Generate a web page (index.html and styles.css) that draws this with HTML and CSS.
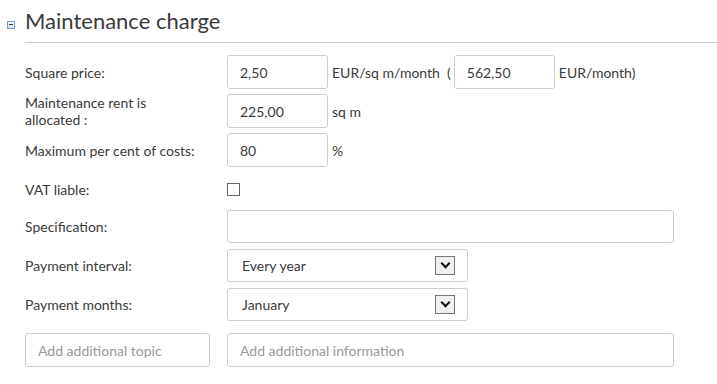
FILE: index.html
```html
<!DOCTYPE html>
<html lang="en">
<head>
    <meta charset="UTF-8">
    <meta name="viewport" content="width=device-width, initial-scale=1.0">
    <title>Maintenance charge</title>
    <link rel="stylesheet" href="styles.css">
</head>
<body>
    <div class="section-header">
        <span class="toggle"></span>
        <h2>Maintenance charge</h2>
    </div>

    <form class="charge-form">
        <div class="row">
            <label for="squarePrice">Square price:</label>
            <input type="text" id="squarePrice" class="field field-small" value="2,50">
            <span class="unit">EUR/sq m/month&nbsp;&nbsp;(</span>
            <input type="text" id="monthly" class="field field-small" value="562,50">
            <span class="unit">EUR/month)</span>
        </div>
        <div class="row">
            <label for="area">Maintenance rent is<br>allocated :</label>
            <input type="text" id="area" class="field field-small" value="225,00">
            <span class="unit">sq m</span>
        </div>
        <div class="row">
            <label for="maxCosts">Maximum per cent of costs:</label>
            <input type="text" id="maxCosts" class="field field-small" value="80">
            <span class="unit">%</span>
        </div>
        <div class="row row-check">
            <label for="vat">VAT liable:</label>
            <input type="checkbox" id="vat" class="check">
        </div>
        <div class="row row-short">
            <label for="spec">Specification:</label>
            <input type="text" id="spec" class="field field-wide field-spec">
        </div>
        <div class="row row-short">
            <label for="interval">Payment interval:</label>
            <div class="select-wrap">
                <select id="interval" class="field">
                    <option>Every year</option>
                </select>
                <span class="select-arrow"></span>
            </div>
        </div>
        <div class="row row-short">
            <label for="months">Payment months:</label>
            <div class="select-wrap">
                <select id="months" class="field">
                    <option>January</option>
                </select>
                <span class="select-arrow"></span>
            </div>
        </div>
        <div class="row row-extra">
            <input type="text" class="field field-topic" placeholder="Add additional topic">
            <input type="text" class="field field-wide" placeholder="Add additional information">
        </div>
    </form>
</body>
</html>
```

FILE: styles.css
```css
* {
    box-sizing: border-box;
    margin: 0;
    padding: 0;
}

body {
    font-family: Lato, "Liberation Sans", sans-serif;
    font-size: 14px;
    color: #3a3a3a;
    background: #fff;
}

.section-header {
    display: flex;
    align-items: center;
    padding: 8px 0 0 7px;
    height: 43px;
}
.toggle {
    width: 8px;
    height: 8px;
    border: 1px solid #7a9cc6;
    background: linear-gradient(#fff, #d8e2ee);
    position: relative;
    margin-right: 10px;
    margin-top: -2px;
}
.toggle::after {
    content: "";
    position: absolute;
    left: 1px;
    top: 2px;
    width: 4px;
    height: 1px;
    background: #333;
}
.section-header h2 {
    flex: 1;
    align-self: stretch;
    font-size: 22px;
    font-weight: normal;
    color: #3a3a3a;
    border-bottom: 1px solid #ccc;
    line-height: 26px;
}

.charge-form {
    padding: 12px 0 0 25px;
}
.row {
    display: flex;
    align-items: center;
    min-height: 34px;
    margin-bottom: 5px;
}
.row label {
    width: 202px;
    flex-shrink: 0;
    padding-right: 18px;
    line-height: 17px;
}
.row-check {
    margin-bottom: 4px;
}
.row-short {
    min-height: 33px;
    margin-bottom: 6px;
}
.row-extra {
    margin-top: 12px;
}

.field {
    height: 34px;
    border: 1px solid #ccc;
    border-radius: 3px;
    padding: 0 12px;
    font-family: inherit;
    font-size: 14px;
    color: #3a3a3a;
    background: #fff;
    outline: none;
}
.field::placeholder {
    color: #999;
}
.field-small {
    width: 101px;
}
.field-wide {
    width: 447px;
}
.field-spec {
    height: 33px;
}
.field-topic {
    width: 185px;
    margin-right: 17px;
}
.unit {
    padding-left: 4px;
    padding-right: 3px;
}

.check {
    appearance: none;
    width: 13px;
    height: 13px;
    border: 1px solid #666;
    background: #fff;
}

.select-wrap {
    position: relative;
}
.select-wrap select {
    appearance: none;
    width: 241px;
    height: 33px;
    padding-left: 14px;
}
.select-arrow {
    position: absolute;
    right: 13px;
    top: 7px;
    width: 20px;
    height: 19px;
    border: 1px solid #777;
    background: #f0f0f0;
    pointer-events: none;
}
.select-arrow::after {
    content: "";
    position: absolute;
    left: 6px;
    top: 3px;
    width: 5px;
    height: 5px;
    border-right: 2px solid #111;
    border-bottom: 2px solid #111;
    transform: rotate(45deg);
}
```
